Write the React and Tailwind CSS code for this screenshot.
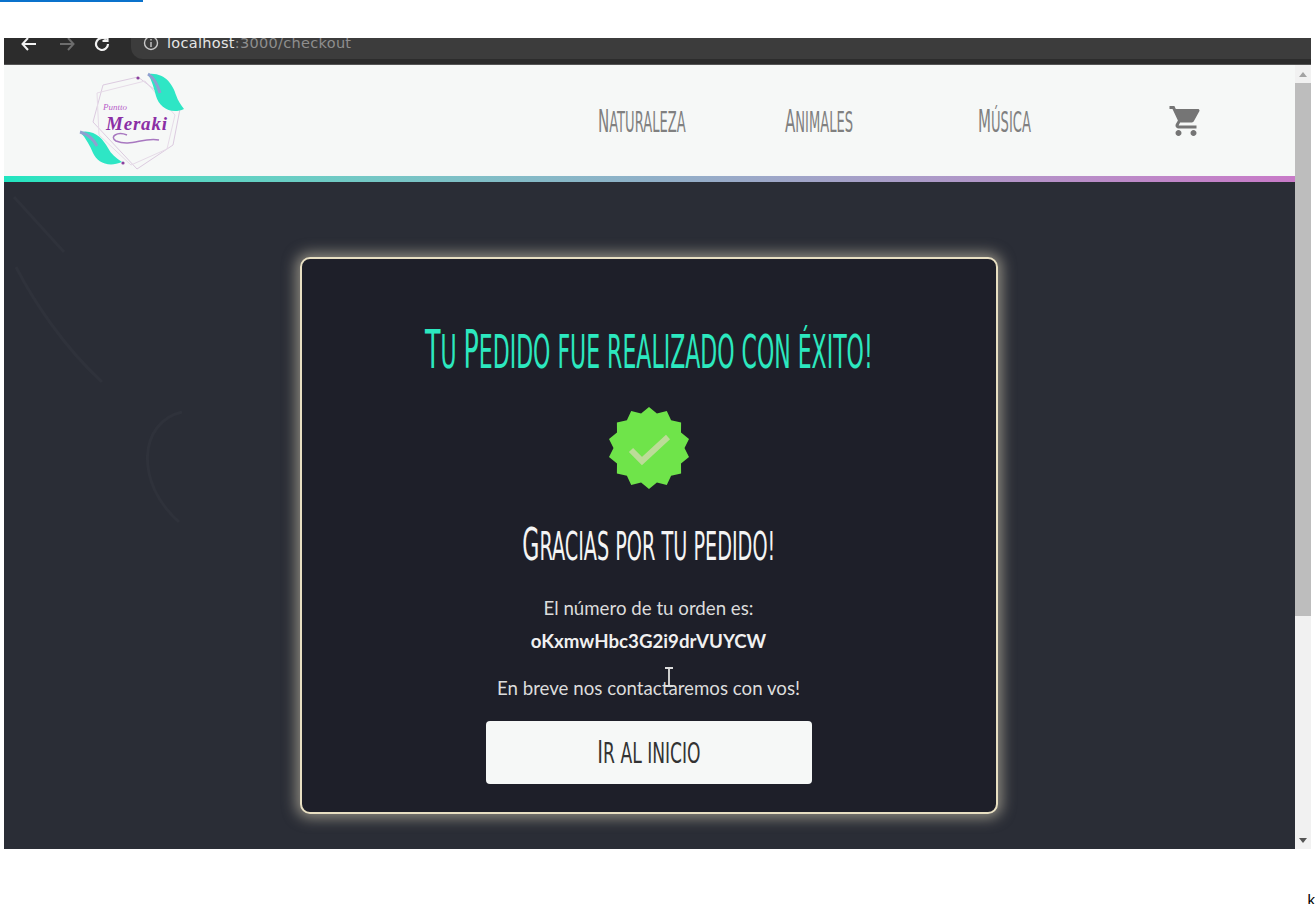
import React from 'react';

const display = { fontFamily: '"Liberation Sans Narrow", "DejaVu Sans Condensed", "Liberation Sans", sans-serif' };

// versalitas: las mayusculas reales un poco mas altas que el resto
const Caps = ({ text }) => (
  <span className="uppercase">
    {text.split(/([A-Z])/).map((part, i) =>
      i % 2 === 1 ? <span key={i} className="text-[1.15em]">{part}</span> : part
    )}
  </span>
);

const Logo = () => (
  <svg width="112" height="104" viewBox="0 0 112 104" className="block">
    <polygon points="28,16 63,8 105,40 98,76 62,100 18,53" fill="none" stroke="#dccbe0" strokeWidth="1" />
    <polygon points="22,24 70,12 100,46 92,80 56,96 24,66" fill="none" stroke="#e6dbe8" strokeWidth="1" />
    <path d="M73 5 C90 3 98 16 101 26 C103 32 106 36 109 40 C96 46 84 38 81 27 C79 19 77 12 73 5Z" fill="#2ee6c5" />
    <path d="M73 5 C78 8 82 14 85 24" fill="none" stroke="#8f9fd0" strokeWidth="3" />
    <circle cx="63" cy="9" r="1.6" fill="#8a3f9e" />
    <path d="M5 63 C20 60 28 70 33 79 C36 85 41 89 47 93 C33 99 22 93 18 84 C15 77 11 69 5 63Z" fill="#2ee6c5" />
    <path d="M5 63 C12 65 18 69 22 77" fill="none" stroke="#8f9fd0" strokeWidth="3" />
    <circle cx="48" cy="94" r="1.6" fill="#8a3f9e" />
    <path d="M52 66 C42 62 34 68 41 72 C56 78 68 68 84 71" fill="none" stroke="#a878c0" strokeWidth="1.5" />
    <text x="28" y="41" fontSize="9" fontFamily="Liberation Serif, serif" fontStyle="italic" fill="#b65fc9">Puntto</text>
    <text x="31" y="61" fontSize="19" fontFamily="Liberation Serif, serif" fontStyle="italic" fontWeight="700" fill="#8b2fa5" letterSpacing="0.8">Meraki</text>
  </svg>
);

const CheckBadge = () => {
  // estrella de 14 puntas
  const points = [];
  for (let i = 0; i < 28; i++) {
    const r = i % 2 === 0 ? 41 : 35.5;
    const a = (i / 28) * Math.PI * 2 - Math.PI / 2;
    points.push(`${(41 + r * Math.cos(a)).toFixed(1)},${(41 + r * Math.sin(a)).toFixed(1)}`);
  }
  return (
    <svg width="82" height="82" viewBox="0 0 82 82" className="block">
      <polygon points={points.join(' ')} fill="#6fe44a" />
      <path d="M23 43 L34 54 L60 30" fill="none" stroke="#bcdc98" strokeWidth="6" />
    </svg>
  );
};

const NavLink = ({ text }) => (
  <a className="block text-[28px] leading-8 whitespace-nowrap text-[#808080] origin-left scale-x-[0.52] translate-y-px" style={display}>
    <Caps text={text} />
  </a>
);

export default function App() {
  return (
    <div className="h-[904px] bg-white overflow-hidden relative" style={{ fontFamily: '"Lato", sans-serif' }}>
      <div className="w-[143px] h-[2px] bg-[#0a72cc]" />

      <div className="ml-1 mr-1 mt-9 flex flex-col h-[811px]">
        {/* barra del navegador */}
        <div className="h-[27px] shrink-0 bg-[#2c2c2c] flex items-start overflow-hidden border-b border-[#555]">
          <div className="flex items-center gap-[20px] pl-4 h-3 text-white">
            <svg width="18" height="18" viewBox="0 0 18 18" fill="none" stroke="#f2f2f2" strokeWidth="2"><path d="M16 9H3M8 3L2.5 9L8 15" /></svg>
            <svg width="18" height="18" viewBox="0 0 18 18" fill="none" stroke="#6d6d6d" strokeWidth="2"><path d="M2 9H15M10 3L15.5 9L10 15" /></svg>
            <svg width="18" height="18" viewBox="0 0 18 18" fill="none" stroke="#f2f2f2" strokeWidth="2.2" className="-ml-[3px]"><path d="M15 9a6 6 0 1 1-2-4.5M14.5 1v5h-5" /></svg>
          </div>
          <div className="ml-[20px] w-[1180px] h-[21px] bg-[#3c3c3c] rounded-bl-xl flex items-start pl-3 gap-2 overflow-hidden">
            <svg width="16" height="16" viewBox="0 0 16 16" fill="none" stroke="#c8c8c8" strokeWidth="1.4" className="-mt-[3px]"><circle cx="8" cy="8" r="6.5" /><path d="M8 7v5M8 4v1.6" /></svg>
            <span className="text-[14.5px] leading-[11px] tracking-[0.3px]" style={{ fontFamily: '"DejaVu Sans", sans-serif' }}>
              <span className="text-[#e6e6e6]">localhost</span><span className="text-[#8e8e8e]">:3000/checkout</span>
            </span>
          </div>
        </div>

        <div className="flex-1 flex min-h-0">
          <div className="flex-1 flex flex-col min-w-0">
            {/* header */}
            <header className="h-[111px] shrink-0 bg-[#f6f8f7] flex items-center">
              <div className="ml-[71px] w-[112px]"><Logo /></div>
              <nav className="flex items-center ml-[411px]">
                <div className="w-[187px]"><NavLink text="Naturaleza" /></div>
                <div className="w-[193px]"><NavLink text="Animales" /></div>
                <div className="w-[191px]"><NavLink text="Música" /></div>
                <svg width="36" height="36" viewBox="0 0 24 24" fill="#757575" className="-ml-[1px]">
                  <path d="M17 18c-1.1 0-1.99.9-1.99 2S15.9 22 17 22s2-.9 2-2-.9-2-2-2zM1 2v2h2l3.6 7.59-1.35 2.45c-.16.28-.25.61-.25.96 0 1.1.9 2 2 2h12v-2H7.42c-.14 0-.25-.11-.25-.25l.03-.12.9-1.63h7.45c.75 0 1.41-.41 1.75-1.03l3.58-6.49c.08-.14.12-.31.12-.48 0-.55-.45-1-1-1H5.21l-.94-2H1zm6 16c-1.1 0-1.99.9-1.99 2S5.9 22 7 22s2-.9 2-2-.9-2-2-2z" />
                </svg>
              </nav>
            </header>
            <div className="h-[6px] shrink-0 bg-gradient-to-r from-[#1fe5c0] via-[#8fb0c8] to-[#c87ac8]" />

            {/* contenido */}
            <main className="relative flex-1 bg-[#2a2d36] flex justify-center min-h-0 pt-[75px] pr-[2px] overflow-hidden">
              {/* trazos tenues del fondo */}
              <svg className="absolute left-0 top-0" width="300" height="420" viewBox="0 0 300 420" fill="none" stroke="#2f323b" strokeWidth="3">
                <path d="M10 15 L60 70" />
                <path d="M12 85 C30 120 60 165 98 200" />
                <path d="M178 230 C135 240 130 300 175 340" />
              </svg>
              <section className="relative w-[698px] h-[557px] bg-[#1e1f29] border-2 border-[#e8dfc2] rounded-[10px] shadow-[0_0_14px_4px_rgba(239,230,200,0.5)] flex flex-col items-center pt-[61px]">
                <h1 className="-mt-[2px] text-[#2ce8bf] text-[46px] leading-[64px] whitespace-nowrap scale-x-[0.532]" style={display}>
                  <Caps text="Tu Pedido fue realizado con éxito!" />
                </h1>
                <div className="mt-[23px]"><CheckBadge /></div>
                <h2 className="mt-[28px] text-[#f4f4f4] text-[39px] leading-[56px] whitespace-nowrap scale-x-[0.548]" style={display}>
                  <Caps text="Gracias por tu pedido!" />
                </h2>
                <p className="mt-[21px] text-[#dcdcdc] text-[18.7px] leading-6 whitespace-nowrap">El número de tu orden es:</p>
                <p className="mt-[9px] text-[#f0f0f0] text-[18.7px] leading-6 font-bold whitespace-nowrap">oKxmwHbc3G2i9drVUYCW</p>
                <p className="mt-[23px] text-[#dcdcdc] text-[18.7px] leading-6 whitespace-nowrap">En breve nos contactaremos con vos!</p>
                <button className="mt-[21px] w-[326px] h-[63px] shrink-0 bg-[#f6f8f7] rounded-[4px] text-[#333] text-[28px] leading-none" style={display}>
                  <span className="inline-block scale-x-[0.68] whitespace-nowrap"><Caps text="Ir al inicio" /></span>
                </button>
              </section>
            </main>
          </div>

          {/* scrollbar */}
          <div className="w-[16px] shrink-0 bg-[#f1f1f1] flex flex-col items-center">
            <div className="h-[18px] w-full flex items-center justify-center shrink-0">
              <div className="w-0 h-0 border-x-[4px] border-x-transparent border-b-[5px] border-b-[#a3a3a3]" />
            </div>
            <div className="w-full h-[533px] bg-[#bdbdbd] shrink-0" />
            <div className="flex-1" />
            <div className="h-[18px] w-full flex items-center justify-center shrink-0">
              <div className="w-0 h-0 border-x-[4px] border-x-transparent border-t-[5px] border-t-[#555]" />
            </div>
          </div>
        </div>
      </div>

      {/* cursor de texto */}
      <div className="absolute left-[665px] top-[667px] w-[8px] h-[20px] border-y-2 border-[#ddd] flex justify-center">
        <div className="w-[2px] bg-[#ccc]" />
      </div>
      <span className="absolute right-0 bottom-[-4px] text-[15px] leading-4 text-black" style={{ fontFamily: '"Liberation Sans", sans-serif' }}>k</span>
    </div>
  );
}
